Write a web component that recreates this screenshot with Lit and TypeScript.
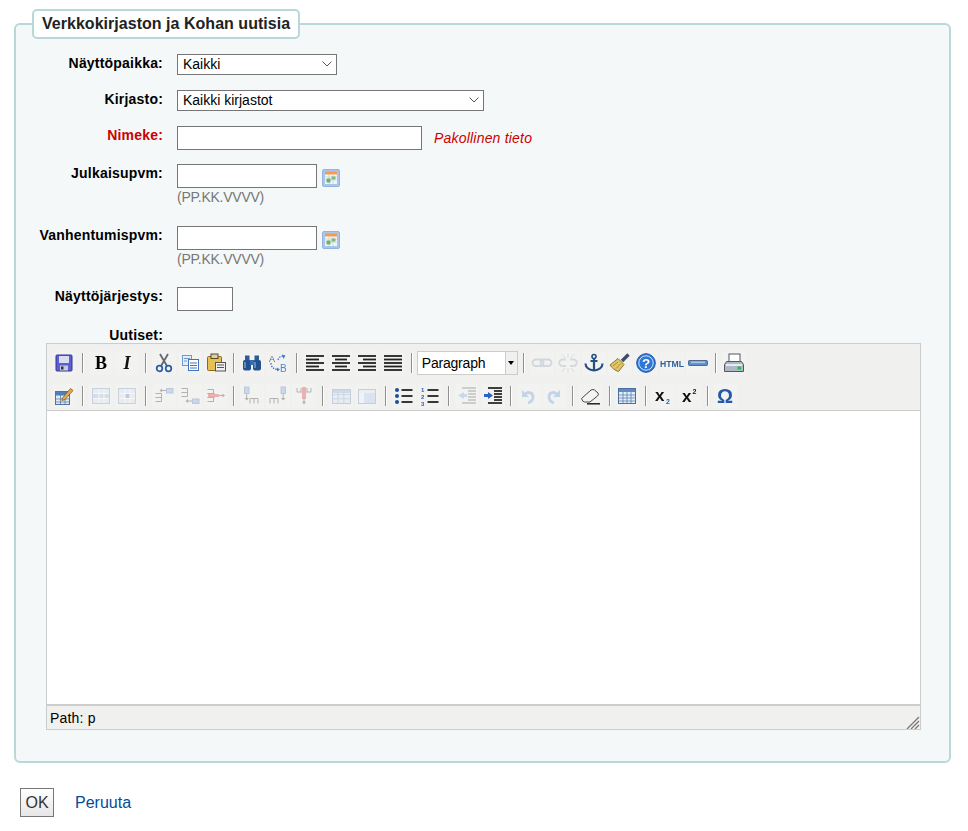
import { LitElement, html, css, svg } from 'lit';
import { customElement } from 'lit/decorators.js';

const serif = '"Liberation Serif", serif';
const sans = '"Liberation Sans", Arial, sans-serif';

const lines = (rows: number[][], color = '#222', w = 1.8) =>
  rows.map(([x1, y, x2]) => svg`<line x1=${x1} y1=${y} x2=${x2} y2=${y} stroke=${color} stroke-width=${w}></line>`);

const grid = (x: number, y: number, w: number, h: number, fill = '#dce6f5', stroke = '#7f9bc4') => svg`
  <rect x=${x + .5} y=${y + .5} width=${w} height=${h} fill=${fill} stroke=${stroke}></rect>
  <rect x=${x + 1} y=${y + 1} width=${w - 1} height="3" fill="#9db8de"></rect>
  <path d="M${x + .5} ${y + h * .4}h${w}M${x + .5} ${y + h * .7}h${w}M${x + w * .33} ${y + 3}v${h - 3}M${x + w * .66} ${y + 3}v${h - 3}" stroke=${stroke} stroke-width=".7" fill="none"></path>`;

const icons: Record<string, any> = {
  save: svg`<rect x="2" y="2" width="16" height="16" rx="1" fill="#5b5fd0" stroke="#35358f"></rect><rect x="5" y="3" width="10" height="7" fill="#d8dcf4"></rect><rect x="6" y="12.5" width="8" height="5" fill="#c8c8d8"></rect><rect x="7" y="13.5" width="2.5" height="3" fill="#333"></rect>`,
  bold: svg`<text x="10" y="15.5" text-anchor="middle" font-family=${serif} font-weight="700" font-size="18" fill="#000">B</text>`,
  italic: svg`<text x="10" y="15.5" text-anchor="middle" font-family=${serif} font-weight="700" font-style="italic" font-size="18" fill="#111">I</text>`,
  cut: svg`<path d="M6 1l7 12M14 1L7 13" stroke="#667" stroke-width="1.8" fill="none"></path><circle cx="5.5" cy="15.5" r="2.8" fill="none" stroke="#2d5fa6" stroke-width="1.8"></circle><circle cx="14.5" cy="15.5" r="2.8" fill="none" stroke="#2d5fa6" stroke-width="1.8"></circle>`,
  copy: svg`<rect x="2.5" y="2.5" width="9" height="10" fill="#e3eefb" stroke="#6f98cf"></rect><rect x="8.5" y="6.5" width="10" height="11" fill="#fff" stroke="#3f74bd"></rect><path d="M10 10h7M10 12.5h7M10 15h7" stroke="#3f74bd"></path><path d="M4 5.5h6M4 8h3" stroke="#6f98cf"></path>`,
  paste: svg`<rect x="1.500" y="3.500" width="14" height="14" rx="1" fill="#e6bf55" stroke="#8a6a1c"></rect><rect x="5" y="1" width="7" height="4.500" fill="#d8d0b0" stroke="#5a4a20"></rect><rect x="9.500" y="9.500" width="10" height="8.500" fill="#f0f0f0" stroke="#555"></rect><path d="M11 12h7M11 14.500h7" stroke="#555"></path>`,
  find: svg`<rect x="3" y="2.500" width="4.500" height="5" fill="#2c5c9c"></rect><rect x="12.500" y="2.500" width="4.500" height="5" fill="#2c5c9c"></rect><rect x="1" y="7" width="8" height="10.500" rx="2" fill="#24528f"></rect><rect x="11" y="7" width="8" height="10.500" rx="2" fill="#24528f"></rect><rect x="8" y="7" width="4" height="5" fill="#3a6cae"></rect><path d="M3 9v6M13 9v6" stroke="#9cc0ec"></path>`,
  replace: svg`<text x="1" y="8.500" font-family=${sans} font-size="9" fill="#667">A</text><text x="12" y="18.500" font-family=${sans} font-size="10" fill="#4b86d6">B</text><path d="M3 10q0 6 7 6.500M10 7q1-4 6-4" stroke="#3f7fd2" stroke-dasharray="1.500 1.200" fill="none" stroke-width="1.400"></path><path d="M14 1.500l3.500 1-2 3.500zM9 14.500l3 2-3 2z" fill="#3f7fd2"></path>`,
  left: lines([[1, 3, 19], [1, 6.5, 14], [1, 10, 19], [1, 13.5, 14], [1, 17, 19]]),
  center: lines([[1, 3, 19], [4, 6.5, 16], [1, 10, 19], [4, 13.5, 16], [1, 17, 19]]),
  right: lines([[1, 3, 19], [6, 6.5, 19], [1, 10, 19], [6, 13.5, 19], [1, 17, 19]]),
  justify: lines([[1, 3, 19], [1, 6.5, 19], [1, 10, 19], [1, 13.5, 19], [1, 17, 19]]),
  link: svg`<rect x=".5" y="6.500" width="11" height="6.500" rx="3.200" fill="none" stroke="#9fb0c0" stroke-width="1.900"></rect><rect x="8.500" y="6.500" width="11" height="6.500" rx="3.200" fill="none" stroke="#9fb0c0" stroke-width="1.900"></rect>`,
  unlink: svg`<path d="M8 6.500H4.500a3.200 3.200 0 000 6.500H8M12 6.500h3.500a3.200 3.200 0 010 6.500H12" fill="none" stroke="#a8b4be" stroke-width="1.900"></path><path d="M10 0v5M10 15v5M4 1l3 4M16 1l-3 4M4 19l3-4M16 19l-3-4" stroke="#b4bac0"></path>`,
  anchor: svg`<circle cx="10" cy="3.500" r="2" fill="none" stroke="#24507f" stroke-width="1.600"></circle><path d="M10 5v12.500M6.500 8h7M1.500 10.500c0 4 4 6.500 8.500 7 4.500-.5 8.500-3 8.500-7" fill="none" stroke="#24507f" stroke-width="2.200"></path>`,
  clean: svg`<path d="M0 12L8 5.500l6 6-5.500 7C5 17.500 2 15 0 12z" fill="#e0c565" stroke="#8a7430"></path><path d="M12 8L18.500 1.500" stroke="#3f4e66" stroke-width="3.400"></path><path d="M3 13l5-4M6 15.500l5-5" stroke="#a8903c"></path>`,
  help: svg`<circle cx="10" cy="10" r="9.300" fill="#2f78d8" stroke="#1c53a4"></circle><circle cx="10" cy="10" r="7.200" fill="none" stroke="#cfe3fb"></circle><text x="10" y="14.800" text-anchor="middle" font-family=${sans} font-weight="700" font-size="13.500" fill="#fff">?</text>`,
  htmlcode: svg`<text x="10" y="13.500" text-anchor="middle" font-family=${sans} font-weight="700" font-size="9.500" textLength="24" lengthAdjust="spacingAndGlyphs" fill="#2f5f9e">HTML</text>`,
  hr: svg`<rect x=".5" y="7.500" width="19" height="5" rx=".8" fill="#5a8ed4" stroke="#3c5470" stroke-width=".8"></rect><rect x="3" y="8.500" width="14" height="1.600" fill="#a8c8ee"></rect>`,
  print: svg`<rect x="5" y="1" width="11" height="8" fill="#fff" stroke="#556"></rect><path d="M2.500 8.500h15l2 3v7H.5v-7z" fill="#aeb9c6" stroke="#556"></path><rect x="2" y="11" width="16" height="2" fill="#e6eaf2"></rect><rect x="13.500" y="13.500" width="3.500" height="3" fill="#22c044"></rect>`,
  edit: svg`<rect x="1.500" y="5.500" width="14" height="13" fill="#dfe8f4" stroke="#50729c"></rect><rect x="2" y="6" width="13" height="3.500" fill="#4f7fb8"></rect><path d="M2 13h13M2 16h13M6.500 9v9M11 9v9" stroke="#50729c" stroke-width=".7"></path><path d="M8.500 12L16.500 2.500l2.500 2-8 9-3 1z" fill="#e8a94c" stroke="#8a5a20" stroke-width=".8"></path>`,
  rowprops: svg`<rect x="1.500" y="2.500" width="17" height="15" fill="#dbe5f3" stroke="#8aa2c4"></rect><rect x="2" y="8" width="16" height="4.500" fill="#a9c0e4"></rect><path d="M2 7.500h16M2 12.500h16M8 3v14M13 3v14" stroke="#fff"></path>`,
  cellprops: svg`<rect x="1.500" y="2.500" width="17" height="15" fill="#dbe5f3" stroke="#8aa2c4"></rect><rect x="8" y="8" width="5" height="4.500" fill="#6f94d6"></rect><path d="M2 7.500h16M2 12.500h16M8 3v14M13 3v14" stroke="#fff"></path>`,
  rowbefore: svg`<path d="M1.500 7.500h6v4h-6M1.500 11.500h6v4h-6" fill="none" stroke="#555"></path><rect x="12.500" y="2.500" width="6.500" height="4.500" fill="#8fb0e0" stroke="#6a8ec4"></rect><path d="M12 4.500H7" stroke="#555"></path><path d="M8 2.500L5.500 4.500 8 6.500z" fill="#555"></path>`,
  rowafter: svg`<path d="M1.500 2.500h6v4h-6M1.500 6.500h6v4h-6" fill="none" stroke="#555"></path><rect x="12.500" y="13" width="6.500" height="4.500" fill="#8fb0e0" stroke="#6a8ec4"></rect><path d="M12 15H7" stroke="#555"></path><path d="M8 13L5.500 15 8 17z" fill="#555"></path>`,
  rowdel: svg`<path d="M1.500 3.500h6v4h-6M1.500 7.500h7v4h-7M1.500 11.500h6v4h-6" fill="none" stroke="#555"></path><rect x="2" y="8" width="11" height="3" fill="#e45050"></rect><path d="M13 9.500h5" stroke="#555"></path><path d="M16.500 7.500L19 9.500 16.500 11.500z" fill="#555"></path>`,
  colbefore: svg`<path d="M8 12.500v5M12 12.500v5M16 12.500v5M8 12.500h8" fill="none" stroke="#555"></path><rect x="2.500" y="1" width="4.500" height="6.500" fill="#8fb0e0" stroke="#6a8ec4"></rect><path d="M4.700 8v5" stroke="#555"></path><path d="M2.500 12l2.200 2.500L7 12z" fill="#555"></path>`,
  colafter: svg`<path d="M2 12.500v5M6 12.500v5M10 12.500v5M2 12.500h8" fill="none" stroke="#555"></path><rect x="13" y="1" width="4.500" height="6.500" fill="#8fb0e0" stroke="#6a8ec4"></rect><path d="M15.200 8v5" stroke="#555"></path><path d="M13 12l2.200 2.500 2.300-2.500z" fill="#555"></path>`,
  coldel: svg`<path d="M3 2v4h14V2M7 2v4M13 2v4" fill="none" stroke="#555"></path><rect x="8" y="1" width="4" height="12" fill="#e45050"></rect><path d="M10 12v5" stroke="#555"></path><path d="M8 15.500l2 3 2-3z" fill="#555"></path>`,
  merge: grid(1, 3, 18, 14),
  split: svg`<rect x="1.500" y="3.500" width="17" height="14" fill="#b9cff0" stroke="#7f9bc4"></rect><rect x="2" y="4" width="16" height="3" fill="#dfe9f8"></rect><rect x="2" y="7" width="5" height="10" fill="#eef3fb"></rect>`,
  bullist: svg`<circle cx="3" cy="4" r="2" fill="#1f4f96"></circle><circle cx="3" cy="10" r="2" fill="#1f4f96"></circle><circle cx="3" cy="16" r="2" fill="#1f4f96"></circle>${lines([[7.500, 4, 18.500], [7.500, 10, 18.500], [7.500, 16, 18.500]])}`,
  numlist: svg`<text x="1" y="5.500" font-family=${sans} font-weight="700" font-size="6" fill="#2a62b8">1</text><text x="1" y="12.500" font-family=${sans} font-weight="700" font-size="6" fill="#2a62b8">2</text><text x="1" y="19.500" font-family=${sans} font-weight="700" font-size="6" fill="#2a62b8">3</text>${lines([[7.500, 4, 18.500], [7.500, 10, 18.500], [7.500, 16, 18.500]])}`,
  outdent: svg`<path d="M1 9.500L7 6v2h3v3H7v2z" fill="#8fb0e6"></path>${lines([[5, 2, 19], [11, 5, 19], [11, 8, 19], [11, 11, 19], [11, 14, 19], [5, 17, 19]], '#777', 1.500)}`,
  indent: svg`<path d="M10 9.500L5 6v2H1v3h4v2z" fill="#2a62c8"></path>${lines([[5, 2, 19], [11, 5, 19], [11, 8, 19], [11, 11, 19], [11, 14, 19], [5, 17, 19]], '#111', 1.600)}`,
  undo: svg`<path d="M3 4v7h7z" fill="#7fa6dc"></path><path d="M6 8c4-3 8-1 8 3 0 3-2 5-5 6" fill="none" stroke="#7fa6dc" stroke-width="2.800"></path>`,
  redo: svg`<path d="M15 4v7H8z" fill="#7fa6dc"></path><path d="M12 8c-4-3-8-1-8 3 0 3 2 5 5 6" fill="none" stroke="#7fa6dc" stroke-width="2.800"></path>`,
  eraser: svg`<path d="M.5 12.500L10 4q2-1 3.500 0l3.500 3q1 1.500-.5 3L9 16H3.500q-2 0-3-3.500z" fill="#f4f4f4" stroke="#444"></path><path d="M6 17.800h13" stroke="#222" stroke-width="1.500"></path>`,
  table: svg`<rect x="1.500" y="2.500" width="17" height="15" fill="#e6eef9" stroke="#4c6f9e"></rect><rect x="2" y="3" width="16" height="3" fill="#5f8bc4"></rect><path d="M2 9h16M2 12h16M2 15h16M6 6v11M10 6v11M14 6v11" stroke="#5b80b4" stroke-width=".8"></path>`,
  sub: svg`<text x="2" y="15" font-family=${sans} font-weight="700" font-size="17" fill="#111">x</text><text x="13" y="18" font-family=${sans} font-weight="700" font-size="7" fill="#2a62b8">2</text>`,
  sup: svg`<text x="3" y="15.500" font-family=${sans} font-weight="700" font-size="17" fill="#111">x</text><text x="13.500" y="8" font-family=${sans} font-weight="700" font-size="7" fill="#111">2</text>`,
  omega: svg`<text x="10" y="17" text-anchor="middle" font-family=${sans} font-weight="700" font-size="20" fill="#2458a8">Ω</text>`,
};

type Item = string;
// "-" is a separator, "_" a narrower one, "sel" the format select, "~name" a disabled button
const row1: Item[] = ['save', '-', 'bold', 'italic', '-', 'cut', 'copy', 'paste', '-', 'find', 'replace', '-', 'left', 'center', 'right', 'justify', '-', 'sel', '-', '~link', '~unlink', 'anchor', 'clean', 'help', 'htmlcode', 'hr', '-', 'print'];
const row2: Item[] = ['edit', '-', '~rowprops', '~cellprops', '-', '~rowbefore', '~rowafter', '~rowdel', '-', '~colbefore', '~colafter', '~coldel', '-', '~merge', '~split', '-', 'bullist', 'numlist', '-', '~outdent', 'indent', '_', '~undo', '~redo', '-', 'eraser', '_', 'table', '_', 'sub', 'sup', '_', 'omega'];

@customElement('app-root')
export class AppRoot extends LitElement {
  static styles = css`
    :host { display: block; font-family: "Liberation Sans", Arial, sans-serif; font-size: 14px; color: #000; background: #fff; min-height: 831px; overflow: hidden; }
    fieldset { margin: 9px 17px 0 14px; padding: 15px 0 31px; border: 2px solid #b9d8d9; border-radius: 6px; background: #f4f8f9; }
    legend { margin-left: 16px; padding: 0 8px; border: 2px solid #b9d8d9; border-radius: 5px; background: #fff; font-size: 16px; font-weight: 700; line-height: 26px; letter-spacing: .03px; color: #222; }
    .row { display: flex; margin-bottom: 15px; }
    .row.m14 { margin-bottom: 14px; }
    .row.m20 { margin-bottom: 20px; }
    .row.m19 { margin-bottom: 19px; }
    .row.flush { margin-bottom: 0; }
    label { width: 147px; height: 17px; margin-right: 14px; text-align: right; font-weight: 700; line-height: 19px; letter-spacing: .2px; flex: none; }
    .req { color: #c00; }
    .pick { position: relative; }
    .pick svg { position: absolute; right: 5px; top: 7px; pointer-events: none; }
    select { display: block; box-sizing: border-box; height: 21px; padding: 0 0 2px 5px; border: 1px solid #767676; border-radius: 0; background: #fff; font: 14px "Liberation Sans", Arial, sans-serif; color: #000; appearance: none; }
    input { display: block; box-sizing: border-box; height: 24px; padding: 0 2px; border: 1px solid #767676; border-radius: 0; background: #fff; }
    .w160 { width: 160px; }
    .w307 { width: 307px; }
    .w245 { width: 245px; }
    .w140 { width: 140px; }
    .w56 { width: 56px; }
    .note { margin-left: 12px; font-style: italic; color: #c00; line-height: 24px; letter-spacing: .2px; }
    .date { display: flex; }
    .cal { margin: 5px 0 0 5px; display: block; }
    .hint { padding-top: 1px; color: #777; line-height: 17px; letter-spacing: -.25px; }
    .editor { margin: 0 28px 0 30px; border: 1px solid #ccc; }
    .toolbar { box-sizing: border-box; height: 67px; padding: 6px 0 0 4px; background: #f0f0ee; border-bottom: 1px solid #ccc; }
    .tools { display: flex; align-items: center; height: 26px; margin-bottom: 7px; }
    .btn { flex: none; box-sizing: border-box; width: 26px; height: 26px; padding: 3px; display: flex; align-items: center; justify-content: center; }
    .btn span { width: 24px; height: 24px; margin: -2px; background: #f2f2f1; display: flex; align-items: center; justify-content: center; }
    .btn svg { display: block; overflow: visible; filter: blur(.3px); }
    .dim svg { opacity: .4; }
    .sep { flex: none; width: 10.750px; display: flex; justify-content: center; }
    .sep.short { width: 10px; }
    .sep i { display: block; width: 1px; height: 20px; background: #8f8f8f; box-shadow: 1px 0 0 #fff; }
    .fmt { flex: none; box-sizing: border-box; width: 101px; height: 24px; display: flex; background: #fff; border: 1px solid #ccc; line-height: 22px; padding-left: 4px; letter-spacing: -.2px; color: #000; }
    .fmt b { flex: 1; font-weight: 400; }
    .fmt em { width: 11px; background: #f0f0ee; border-left: 1px solid #ccc; display: flex; align-items: center; justify-content: center; }
    .fmt em::after { content: ""; border: 3px solid transparent; border-top: 4px solid #000; border-bottom: 0; }
    .area { height: 293px; background: #fff; }
    .status { position: relative; box-sizing: border-box; height: 25px; padding-left: 3px; background: #f0f0ee; border-top: 2px solid #ccc; line-height: 24px; letter-spacing: .2px; }
    .grip { position: absolute; right: 0; bottom: 0; display: block; }
    .actions { display: flex; align-items: center; margin: 25px 0 0 20px; }
    button { box-sizing: border-box; width: 34px; height: 29px; padding: 0; border: 1px solid #777; background: linear-gradient(#fff, #e6e6e6); font: 16px "Liberation Sans", Arial, sans-serif; color: #333; }
    a { margin-left: 21px; font-size: 16px; color: #004d99; text-decoration: none; }
  `;

  calendar() {
    return html`<svg class="cal" width="18" height="18" viewBox="0 0 18 18">
      <rect x=".5" y=".5" width="17" height="17" rx="1.500" fill="#a9c6ea" stroke="#93b4de"></rect>
      <rect x="3" y="3" width="12" height="12" fill="#f2f4f7"></rect>
      <rect x="3" y="2.500" width="12" height="3" fill="#f59a4e"></rect>
      <path d="M3 8h12M3 11h12M7 5.500V15M11 5.500V15" stroke="#c5cfdb" stroke-width=".7"></path>
      <rect x="4.500" y="9.500" width="4" height="4" fill="#6fb06a"></rect>
      <rect x="9.500" y="7.500" width="4" height="3" fill="#7dbb78"></rect>
    </svg>`;
  }

  chevron() {
    return html`<svg width="10" height="6" viewBox="0 0 10 6"><path d="M.5.5L5 5 9.500.5" fill="none" stroke="#555"></path></svg>`;
  }

  tools(items: Item[]) {
    return html`<div class="tools">${items.map((it) => {
      if (it === '-') return html`<div class="sep"><i></i></div>`;
      if (it === '_') return html`<div class="sep short"><i></i></div>`;
      if (it === 'sel') return html`<div class="fmt"><b>Paragraph</b><em></em></div>`;
      const dim = it.startsWith('~');
      const name = dim ? it.slice(1) : it;
      return html`<div class="btn ${dim ? 'dim' : ''}"><span><svg width="20" height="20" viewBox="0 0 20 20">${icons[name]}</svg></span></div>`;
    })}</div>`;
  }

  render() {
    return html`
      <form>
        <fieldset>
          <legend>Verkkokirjaston ja Kohan uutisia</legend>
          <div class="row">
            <label>Näyttöpaikka:</label>
            <div class="pick"><select class="w160"><option>Kaikki</option></select>${this.chevron()}</div>
          </div>
          <div class="row">
            <label>Kirjasto:</label>
            <div class="pick"><select class="w307"><option>Kaikki kirjastot</option></select>${this.chevron()}</div>
          </div>
          <div class="row m14">
            <label class="req">Nimeke:</label>
            <input class="w245" type="text" />
            <span class="note">Pakollinen tieto</span>
          </div>
          <div class="row m20">
            <label>Julkaisupvm:</label>
            <div>
              <div class="date"><input class="w140" type="text" />${this.calendar()}</div>
              <div class="hint">(PP.KK.VVVV)</div>
            </div>
          </div>
          <div class="row m19">
            <label>Vanhentumispvm:</label>
            <div>
              <div class="date"><input class="w140" type="text" />${this.calendar()}</div>
              <div class="hint">(PP.KK.VVVV)</div>
            </div>
          </div>
          <div class="row">
            <label>Näyttöjärjestys:</label>
            <input class="w56" type="text" />
          </div>
          <div class="row flush"><label>Uutiset:</label></div>
          <div class="editor">
            <div class="toolbar">
              ${this.tools(row1)}
              ${this.tools(row2)}
            </div>
            <div class="area"></div>
            <div class="status">Path: p
              <svg class="grip" width="14" height="13" viewBox="0 0 14 13"><path d="M1 13L13 1M5 13L13 5M9 13l4-4" stroke="#777" stroke-width="1.300" fill="none"></path></svg>
            </div>
          </div>
        </fieldset>
        <div class="actions">
          <button type="button">OK</button>
          <a href="#">Peruuta</a>
        </div>
      </form>
    `;
  }
}
